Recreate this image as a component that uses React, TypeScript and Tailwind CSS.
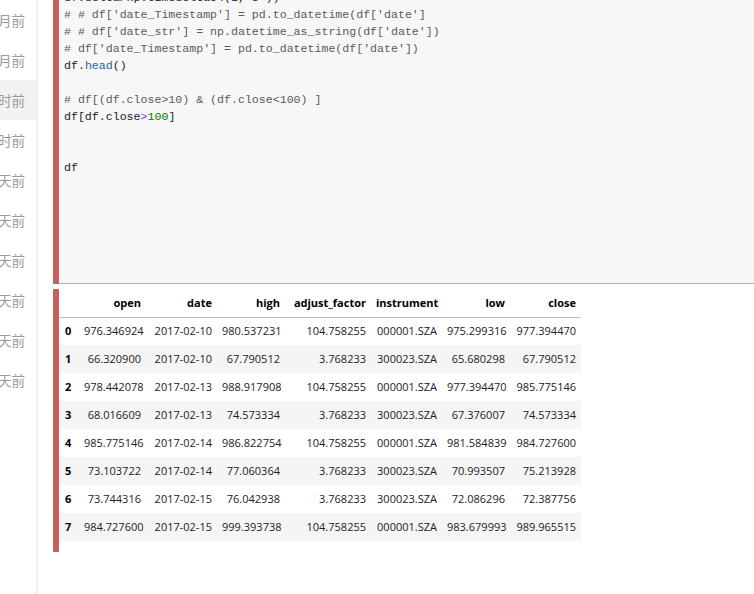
const sidebar = ["2个月前", "3个月前", "1小时前", "5小时前", "2天前", "3天前", "4天前", "5天前", "6天前", "7天前"];

const columns = [
  { key: "open", w: "w-[67px]" },
  { key: "date", w: "w-[71px]" },
  { key: "high", w: "w-[68px]" },
  { key: "adjust_factor", w: "w-[86px]" },
  { key: "instrument", w: "w-[71px]" },
  { key: "low", w: "w-[68px]" },
  { key: "close", w: "w-[71px]" },
];

const rows = [
  ["976.346924", "2017-02-10", "980.537231", "104.758255", "000001.SZA", "975.299316", "977.394470"],
  ["66.320900", "2017-02-10", "67.790512", "3.768233", "300023.SZA", "65.680298", "67.790512"],
  ["978.442078", "2017-02-13", "988.917908", "104.758255", "000001.SZA", "977.394470", "985.775146"],
  ["68.016609", "2017-02-13", "74.573334", "3.768233", "300023.SZA", "67.376007", "74.573334"],
  ["985.775146", "2017-02-14", "986.822754", "104.758255", "000001.SZA", "981.584839", "984.727600"],
  ["73.103722", "2017-02-14", "77.060364", "3.768233", "300023.SZA", "70.993507", "75.213928"],
  ["73.744316", "2017-02-15", "76.042938", "3.768233", "300023.SZA", "72.086296", "72.387756"],
  ["984.727600", "2017-02-15", "999.393738", "104.758255", "000001.SZA", "983.679993", "989.965515"],
];

function Comment({ children }: { children: string }) {
  return <div className="text-[#5a5a5a]">{children}</div>;
}

function CodeCell() {
  return (
    <div className="flex h-[284px] shrink-0">
      <div className="w-[6px] shrink-0 bg-[#c75f5f]" />
      <div className="flex-1 overflow-hidden border-b border-[#dba4a4] bg-[#f7f7f7] pl-[5px]">
        <div className="mt-[-11px] whitespace-pre font-['Liberation_Mono',monospace] text-[11.6px] leading-[17px] text-[#222]">
          <div>df.delta/np.timedelta64(1,'s'))</div>
          <Comment>{"# # df['date_Timestamp'] = pd.to_datetime(df['date']"}</Comment>
          <Comment>{"# # df['date_str'] = np.datetime_as_string(df['date'])"}</Comment>
          <Comment>{"# df['date_Timestamp'] = pd.to_datetime(df['date'])"}</Comment>
          <div>
            df.<span className="text-[#2a5db0]">head</span>()
          </div>
          <div>{" "}</div>
          <Comment>{"# df[(df.close>10) & (df.close<100) ]"}</Comment>
          <div>
            df[df.close<span className="text-[#aa22ff]">&gt;</span>
            <span className="text-[#008000]">100</span>]
          </div>
          <div>{" "}</div>
          <div>{" "}</div>
          <div>df</div>
        </div>
      </div>
    </div>
  );
}

function OutputCell() {
  return (
    <div className="mt-[5px] flex shrink-0">
      <div className="w-[6px] shrink-0 rounded-b-[1px] bg-[#c75f5f]" />
      <div className="pb-[11px]">
        <table className="w-[522px] table-fixed border-collapse font-['Open_Sans',sans-serif] text-[11px] text-[#222]">
          <colgroup>
            <col className="w-[20px]" />
            {columns.map((c) => (
              <col key={c.key} className={c.w} />
            ))}
          </colgroup>
          <thead>
            <tr className="h-[28px] border-b border-[#bdbdbd]">
              <th />
              {columns.map((c) => (
                <th key={c.key} className="whitespace-nowrap px-[5px] text-right font-bold text-black">
                  {c.key}
                </th>
              ))}
            </tr>
          </thead>
          <tbody>
            {rows.map((r, i) => (
              <tr key={i} className={i % 2 === 1 ? "h-[28px] bg-[#f5f5f5]" : "h-[28px]"}>
                <th className="pl-[6px] text-left font-bold text-black">{i}</th>
                {r.map((v, j) => (
                  <td key={j} className="whitespace-nowrap px-[5px] text-right">
                    {v}
                  </td>
                ))}
              </tr>
            ))}
          </tbody>
        </table>
      </div>
    </div>
  );
}

export default function App() {
  return (
    <div className="flex h-[594px] w-[754px] overflow-hidden bg-white">
      <aside className="w-[38px] shrink-0 border-r-2 border-[#efefef] font-['Noto_Sans_CJK_SC',sans-serif] text-[13.5px] text-[#999]">
        {sidebar.map((t, i) => (
          <div
            key={i}
            className={
              "flex h-[40px] items-center justify-end overflow-hidden whitespace-nowrap pr-[11px] " +
              (i === 2 ? "bg-[#f2f2f2]" : "")
            }
          >
            <span>{t}</span>
          </div>
        ))}
      </aside>
      <main className="flex min-w-0 flex-1 flex-col pl-[15px]">
        <CodeCell />
        <OutputCell />
      </main>
    </div>
  );
}
